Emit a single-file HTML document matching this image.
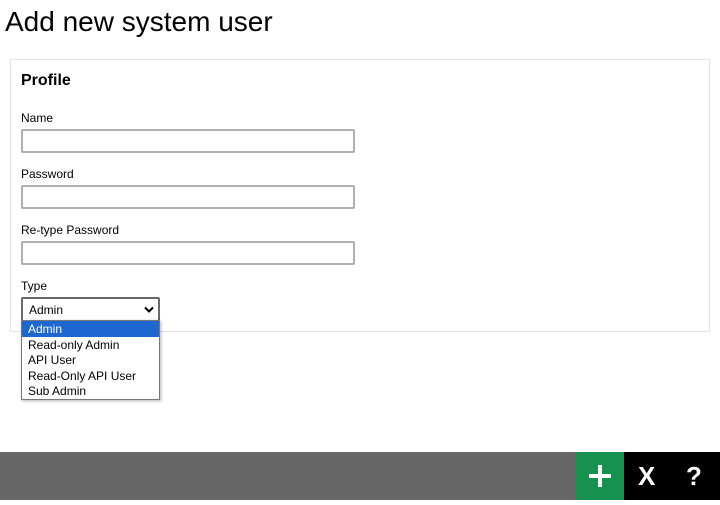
<!DOCTYPE html><html><head><style>
body{margin:0;width:720px;height:500px;background:#fff;font-family:"Liberation Sans",Arial,sans-serif;position:relative;overflow:hidden;color:#000}
h1{position:absolute;left:5px;top:6px;margin:0;font-size:28px;font-weight:normal}
.panel{position:absolute;left:10px;top:59px;width:698px;height:271px;border:1px solid #e3e3e3}
.pt{position:absolute;left:21px;top:72px;font-size:16px;font-weight:bold}
.lb{position:absolute;left:21px;font-size:12px}
.in{position:absolute;left:21px;width:330px;height:20px;border:2px solid #b0b0b0;border-radius:2px}
.sel{position:absolute;left:21px;top:297px;width:135px;height:21px;border:2px solid #6a6a6a;border-radius:2px;font-size:12px;line-height:22px;box-sizing:content-box}
.dd{position:absolute;left:21px;top:320px;width:137px;height:78px;border:1px solid #777;background:#fff;box-shadow:1px 1px 3px rgba(0,0,0,.3);font-size:12px}
.dd div{height:15.5px;line-height:16px;padding-left:6px}
.bar{position:absolute;left:0;top:452px;width:720px;height:48px;background:#666}
.g{position:absolute;left:576px;top:452px;width:48px;height:48px;background:#16924f}
.k{position:absolute;left:624px;top:452px;width:96px;height:48px;background:#000;color:#fff;font-weight:bold;font-size:26px}
</style></head><body>
<h1>Add new system user</h1>
<div class="panel"></div>
<div class="pt">Profile</div>
<div class="lb" style="top:111px">Name</div><div class="in" style="top:129px"></div>
<div class="lb" style="top:167px">Password</div><div class="in" style="top:185px"></div>
<div class="lb" style="top:223px">Re-type Password</div><div class="in" style="top:241px"></div>
<div class="lb" style="top:279px">Type</div>
<div class="sel"><span style="padding-left:6px">Admin</span>
<svg style="position:absolute;right:4px;top:7px" width="10" height="7" viewBox="0 0 10 7"><path d="M1 1.5 5 5.5 9 1.5" stroke="#000" stroke-width="2" fill="none"/></svg></div>
<div class="dd"><div style="background:#1e66d0;color:#fff">Admin</div><div>Read-only Admin</div><div>API User</div><div>Read-Only API User</div><div>Sub Admin</div></div>
<div class="bar"></div>
<div class="g"><svg width="48" height="48"><path d="M24 13v22M13 24h22" stroke="#fff" stroke-width="4"/></svg></div>
<div class="k"><span style="position:absolute;left:14px;top:9px">X</span><span style="position:absolute;left:62px;top:9px">?</span></div>
</body></html>
